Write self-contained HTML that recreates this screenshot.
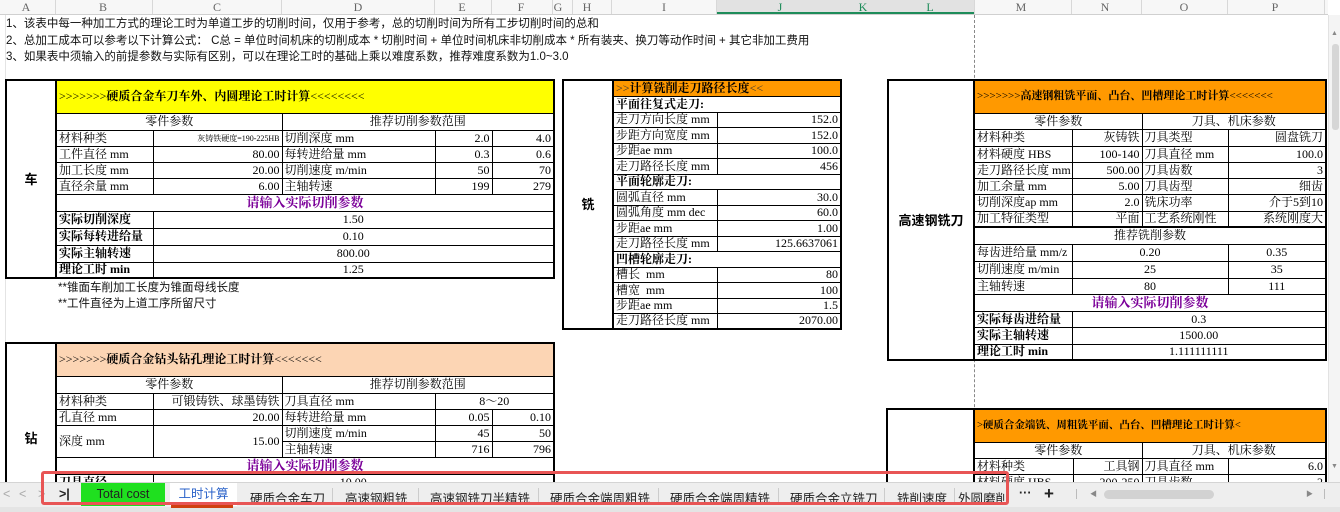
<!DOCTYPE html>
<html><head><meta charset="utf-8"><style>
*{box-sizing:border-box;margin:0;padding:0}
body{width:1340px;height:511px;overflow:hidden;background:#fff;position:relative;font-family:"Liberation Serif","Noto Serif CJK SC",serif;font-size:12px;color:#000}
.abs{position:absolute}
.hdr{position:absolute;top:0;left:0;width:1328px;height:15px;background:#f7f7f7;border-bottom:1px solid #d0d0d0;font-size:12px;color:#666}
.hdr span{position:absolute;top:0;line-height:14px;transform:translateX(-50%)}
.hdr i{position:absolute;top:0;height:14px;border-left:1px solid #d8d8d8}
.vg{position:absolute;top:15px;height:467px;border-left:1px solid #e4e4e4}
table{position:absolute;border-collapse:collapse;table-layout:fixed;background:#fff;border:2px solid #000}
td{border:1px solid #000;padding:0 2px;white-space:nowrap;overflow:hidden;line-height:13px;font-size:12px}
.r{text-align:right}.c{text-align:center}.b{font-weight:bold}
.pu{color:#7b0099;font-weight:bold;text-align:center;font-size:13px}
.lab{font-weight:bold;text-align:center;font-family:"Liberation Sans","Noto Sans CJK SC",sans-serif;font-size:13px}
.t{font-weight:bold;font-size:12px}
.g{font-size:11px;color:#800}
.note{position:absolute;left:6px;font-family:"Liberation Sans","Noto Sans CJK SC",sans-serif;font-size:11.5px;color:#111;white-space:nowrap}
</style></head><body>

<div class="hdr">
<span style="left:26px">A</span><span style="left:103px">B</span><span style="left:217px">C</span><span style="left:358px">D</span><span style="left:462px">E</span><span style="left:521px">F</span><span style="left:558px">G</span><span style="left:587px">H</span><span style="left:664px">I</span>
<div style="position:absolute;left:716px;top:0;width:258px;height:14px;background:#e2e2e2;border-bottom:2px solid #1e8c5a"></div>
<span style="left:780px;color:#1e8c5a">J</span><span style="left:863px;color:#1e8c5a">K</span><span style="left:930px;color:#1e8c5a">L</span><span style="left:1021px">M</span><span style="left:1105px">N</span><span style="left:1184px">O</span><span style="left:1275px">P</span>
<i style="left:55px"></i><i style="left:152px"></i><i style="left:281px"></i><i style="left:434px"></i><i style="left:491px"></i><i style="left:552px"></i><i style="left:572px"></i><i style="left:611px"></i><i style="left:716px"></i><i style="left:974px"></i><i style="left:1071px"></i><i style="left:1141px"></i><i style="left:1227px"></i><i style="left:1324px"></i>
</div>
<div class="vg" style="left:5px"></div>
<div class="abs" style="left:974px;top:15px;height:467px;border-left:1px dashed #888"></div>

<div class="note" style="top:15px">1、该表中每一种加工方式的理论工时为单道工步的切削时间，仅用于参考，总的切削时间为所有工步切削时间的总和</div>
<div class="note" style="top:32px">2、总加工成本可以参考以下计算公式：&nbsp;C总 = 单位时间机床的切削成本 * 切削时间 + 单位时间机床非切削成本 * 所有装夹、换刀等动作时间 + 其它非加工费用</div>
<div class="note" style="top:48px">3、如果表中须输入的前提参数与实际有区别，可以在理论工时的基础上乘以难度系数，推荐难度系数为1.0~3.0</div>

<!-- Table 1 车 -->
<table style="left:5px;top:79px;width:548px">
<colgroup><col style="width:50px"><col style="width:97px"><col style="width:129px"><col style="width:153px"><col style="width:57px"><col style="width:62px"></colgroup>
<tr style="height:33px"><td rowspan="11" class="lab" style="border-right:2px solid #000">车</td><td colspan="5" class="t" style="background:#ffff00"><span style="font-weight:normal">&gt;&gt;&gt;&gt;&gt;&gt;&gt;</span>硬质合金车刀车外、内圆理论工时计算<span style="font-weight:normal">&lt;&lt;&lt;&lt;&lt;&lt;&lt;&lt;</span></td></tr>
<tr style="height:17px"><td colspan="2" class="c">零件参数</td><td colspan="3" class="c">推荐切削参数范围</td></tr>
<tr style="height:16px"><td>材料种类</td><td class="r" style="font-size:8px">灰铸铁硬度=190-225HB</td><td>切削深度 mm</td><td class="r">2.0</td><td class="r">4.0</td></tr>
<tr style="height:16px"><td>工件直径 mm</td><td class="r">80.00</td><td>每转进给量 mm</td><td class="r">0.3</td><td class="r">0.6</td></tr>
<tr style="height:16px"><td>加工长度 mm</td><td class="r">20.00</td><td>切削速度 m/min</td><td class="r">50</td><td class="r">70</td></tr>
<tr style="height:16px"><td>直径余量 mm</td><td class="r">6.00</td><td>主轴转速</td><td class="r">199</td><td class="r">279</td></tr>
<tr style="height:17px"><td colspan="5" class="pu">请输入实际切削参数</td></tr>
<tr style="height:17px"><td class="b">实际切削深度</td><td colspan="4" class="c">1.50</td></tr>
<tr style="height:17px"><td class="b">实际每转进给量</td><td colspan="4" class="c">0.10</td></tr>
<tr style="height:17px"><td class="b">实际主轴转速</td><td colspan="4" class="c">800.00</td></tr>
<tr style="height:16px"><td class="b">理论工时 min</td><td colspan="4" class="c">1.25</td></tr>
</table>
<div class="note" style="left:58px;top:279px">**锥面车削加工长度为锥面母线长度</div>
<div class="note" style="left:58px;top:295px">**工件直径为上道工序所留尺寸</div>

<!-- Table 2 铣 -->
<table style="left:562px;top:79px;width:278px">
<colgroup><col style="width:50px"><col style="width:104px"><col style="width:124px"></colgroup>
<tr style="height:16px"><td rowspan="17" class="lab" style="border-right:2px solid #000">铣</td><td colspan="2" class="t" style="background:#ff9900"><span style="font-weight:normal;color:#333">&gt;&gt;</span>计算铣削走刀路径长度<span style="font-weight:normal;color:#333">&lt;&lt;</span></td></tr>
<tr style="height:16px"><td colspan="2" class="b">平面往复式走刀:</td></tr>
<tr style="height:15px"><td>走刀方向长度 mm</td><td class="r">152.0</td></tr>
<tr style="height:16px"><td>步距方向宽度 mm</td><td class="r">152.0</td></tr>
<tr style="height:15px"><td>步距ae mm</td><td class="r">100.0</td></tr>
<tr style="height:16px"><td>走刀路径长度 mm</td><td class="r">456</td></tr>
<tr style="height:15px"><td colspan="2" class="b">平面轮廓走刀:</td></tr>
<tr style="height:16px"><td>圆弧直径 mm</td><td class="r">30.0</td></tr>
<tr style="height:15px"><td>圆弧角度 mm dec</td><td class="r">60.0</td></tr>
<tr style="height:16px"><td>步距ae mm</td><td class="r">1.00</td></tr>
<tr style="height:15px"><td>走刀路径长度 mm</td><td class="r">125.6637061</td></tr>
<tr style="height:16px"><td colspan="2" class="b">凹槽轮廓走刀:</td></tr>
<tr style="height:15px"><td>槽长&nbsp; mm</td><td class="r">80</td></tr>
<tr style="height:16px"><td>槽宽&nbsp; mm</td><td class="r">100</td></tr>
<tr style="height:15px"><td>步距ae mm</td><td class="r">1.5</td></tr>
<tr style="height:16px"><td>走刀路径长度 mm</td><td class="r">2070.00</td></tr>
</table>

<!-- Table 3 高速钢铣刀 -->
<table style="left:887px;top:79px;width:438px">
<colgroup><col style="width:86px"><col style="width:98px"><col style="width:70px"><col style="width:86px"><col style="width:98px"></colgroup>
<tr style="height:33px"><td rowspan="16" class="lab" style="border-right:2px solid #000">高速钢铣刀</td><td colspan="4" class="t" style="background:#ff9900;font-size:11px"><span style="font-weight:normal">&gt;&gt;&gt;&gt;&gt;&gt;&gt;</span>高速钢粗铣平面、凸台、凹槽理论工时计算<span style="font-weight:normal">&lt;&lt;&lt;&lt;&lt;&lt;&lt;</span></td></tr>
<tr style="height:16px"><td colspan="2" class="c">零件参数</td><td colspan="2" class="c">刀具、机床参数</td></tr>
<tr style="height:17px"><td>材料种类</td><td class="r">灰铸铁</td><td>刀具类型</td><td class="r">圆盘铣刀</td></tr>
<tr style="height:16px"><td>材料硬度 HBS</td><td class="r">100-140</td><td>刀具直径 mm</td><td class="r">100.0</td></tr>
<tr style="height:16px"><td>走刀路径长度 mm</td><td class="r">500.00</td><td>刀具齿数</td><td class="r">3</td></tr>
<tr style="height:16px"><td>加工余量 mm</td><td class="r">5.00</td><td>刀具齿型</td><td class="r">细齿</td></tr>
<tr style="height:17px"><td>切削深度ap mm</td><td class="r">2.0</td><td>铣床功率</td><td class="r">介于5到10</td></tr>
<tr style="height:16px"><td>加工特征类型</td><td class="r">平面</td><td>工艺系统刚性</td><td class="r">系统刚度大</td></tr>
<tr style="height:17px"><td colspan="4" class="c" style="border-top:2px solid #000">推荐铣削参数</td></tr>
<tr style="height:17px"><td>每齿进给量 mm/z</td><td colspan="2" class="c">0.20</td><td class="c">0.35</td></tr>
<tr style="height:17px"><td>切削速度 m/min</td><td colspan="2" class="c">25</td><td class="c">35</td></tr>
<tr style="height:16px"><td>主轴转速</td><td colspan="2" class="c">80</td><td class="c">111</td></tr>
<tr style="height:17px"><td colspan="4" class="pu">请输入实际切削参数</td></tr>
<tr style="height:16px"><td class="b">实际每齿进给量</td><td colspan="3" class="c">0.3</td></tr>
<tr style="height:17px"><td class="b">实际主轴转速</td><td colspan="3" class="c">1500.00</td></tr>
<tr style="height:16px"><td class="b">理论工时 min</td><td colspan="3" class="c">1.111111111</td></tr>
</table>

<!-- Table 4 钻 -->
<table style="left:5px;top:342px;width:548px">
<colgroup><col style="width:50px"><col style="width:97px"><col style="width:129px"><col style="width:153px"><col style="width:57px"><col style="width:62px"></colgroup>
<tr style="height:33px"><td rowspan="10" class="lab" style="border-right:2px solid #000;vertical-align:top;padding-top:88px">钻</td><td colspan="5" class="t" style="background:#fcd5b4"><span style="font-weight:normal">&gt;&gt;&gt;&gt;&gt;&gt;&gt;</span>硬质合金钻头钻孔理论工时计算<span style="font-weight:normal">&lt;&lt;&lt;&lt;&lt;&lt;&lt;</span></td></tr>
<tr style="height:17px"><td colspan="2" class="c">零件参数</td><td colspan="3" class="c">推荐切削参数范围</td></tr>
<tr style="height:16px"><td>材料种类</td><td class="r">可锻铸铁、球墨铸铁</td><td>刀具直径 mm</td><td colspan="2" class="c">8～20</td></tr>
<tr style="height:16px"><td>孔直径 mm</td><td class="r">20.00</td><td>每转进给量 mm</td><td class="r">0.05</td><td class="r">0.10</td></tr>
<tr style="height:16px"><td rowspan="2">深度 mm</td><td rowspan="2" class="r">15.00</td><td>切削速度 m/min</td><td class="r">45</td><td class="r">50</td></tr>
<tr style="height:16px"><td>主轴转速</td><td class="r">716</td><td class="r">796</td></tr>
<tr style="height:17px"><td colspan="5" class="pu">请输入实际切削参数</td></tr>
<tr style="height:17px"><td class="b">刀具直径</td><td colspan="4" class="c">10.00</td></tr>
<tr style="height:17px"><td class="b">&nbsp;</td><td colspan="4"></td></tr>
</table>

<!-- Table 5 -->
<table style="left:886px;top:408px;width:439px">
<colgroup><col style="width:87px"><col style="width:99px"><col style="width:69px"><col style="width:86px"><col style="width:98px"></colgroup>
<tr style="height:33px"><td rowspan="5" style="border-right:2px solid #000"></td><td colspan="4" class="t" style="background:#ff9900;font-size:10.5px"><span style="font-weight:normal">&gt;</span>硬质合金端铣、周粗铣平面、凸台、凹槽理论工时计算<span style="font-weight:normal">&lt;</span></td></tr>
<tr style="height:16px"><td colspan="2" class="c">零件参数</td><td colspan="2" class="c">刀具、机床参数</td></tr>
<tr style="height:16px"><td>材料种类</td><td class="r">工具钢</td><td>刀具直径 mm</td><td class="r">6.0</td></tr>
<tr style="height:16px"><td>材料硬度 HBS</td><td class="r">200-250</td><td>刀具齿数</td><td class="r">2</td></tr>
<tr style="height:16px"><td></td><td></td><td></td><td></td></tr>
</table>

<!-- vertical scrollbar -->
<div class="abs" style="left:1328px;top:15px;width:12px;height:467px;background:#f4f4f4;border-left:1px solid #e2e2e2"></div>
<div class="abs" style="left:1332px;top:44px;width:7px;height:86px;background:#d6d6d6;border-radius:3px"></div>
<div class="abs" style="left:1331px;top:29px;font-size:7px;color:#888">▲</div>
<div class="abs" style="left:1331px;top:462px;font-size:7px;color:#888">▼</div>

<!-- tab bar -->
<div class="abs" style="left:0;top:482px;width:1340px;height:29px;background:#eeeeee;border-top:1px solid #d4d4d4;font-family:'Liberation Sans','Noto Sans CJK SC',sans-serif;font-size:12.5px;color:#222">
  <div class="abs" style="left:0;top:24px;width:1340px;height:5px;background:#e4e4e4"></div>
  <span class="abs" style="left:3px;top:4px;color:#aaa">&lt;</span>
  <span class="abs" style="left:19px;top:4px;color:#aaa">&lt;</span>
  <span class="abs" style="left:38px;top:4px;color:#aaa">&gt;</span>
  <span class="abs" style="left:59px;top:4px;font-weight:bold">&gt;|</span>
  <div class="abs" style="left:81px;top:0;width:84px;height:23px;background:#1fe01f;text-align:center;line-height:23px">Total cost</div>
  <div class="abs" style="left:170px;top:0;width:67px;height:23px;background:#fff;text-align:center;line-height:23px;color:#2a62c9">工时计算</div>
  <div class="abs" style="left:171px;top:22px;width:62px;height:3px;background:#d04010"></div>
  <span class="abs" style="left:250px;top:5px">硬质合金车刀</span>
  <span class="abs" style="left:345px;top:5px">高速钢粗铣</span>
  <span class="abs" style="left:430px;top:5px">高速钢铣刀半精铣</span>
  <span class="abs" style="left:550px;top:5px">硬质合金端周粗铣</span>
  <span class="abs" style="left:670px;top:5px">硬质合金端周精铣</span>
  <span class="abs" style="left:790px;top:5px">硬质合金立铣刀</span>
  <span class="abs" style="left:897px;top:5px">铣削速度</span>
  <span class="abs" style="left:958px;top:5px">外圆磨削</span>
  <i class="abs" style="left:332px;top:5px;height:14px;border-left:1px solid #ccc"></i>
  <i class="abs" style="left:418px;top:5px;height:14px;border-left:1px solid #ccc"></i>
  <i class="abs" style="left:538px;top:5px;height:14px;border-left:1px solid #ccc"></i>
  <i class="abs" style="left:658px;top:5px;height:14px;border-left:1px solid #ccc"></i>
  <i class="abs" style="left:778px;top:5px;height:14px;border-left:1px solid #ccc"></i>
  <i class="abs" style="left:884px;top:5px;height:14px;border-left:1px solid #ccc"></i>
  <i class="abs" style="left:954px;top:5px;height:14px;border-left:1px solid #ccc"></i>
  <span class="abs" style="left:1019px;top:3px;font-weight:bold">···</span>
  <span class="abs" style="left:1044px;top:1px;font-size:17px;font-weight:bold">+</span>
  <i class="abs" style="left:1076px;top:6px;height:10px;border-left:1px solid #bbb"></i>
  <span class="abs" style="left:1090px;top:6px;font-size:7px;color:#888">◀</span>
  <div class="abs" style="left:1104px;top:7px;width:110px;height:9px;background:#d2d2d2;border-radius:5px"></div>
  <span class="abs" style="left:1306px;top:6px;font-size:7px;color:#888">▶</span>
  <i class="abs" style="left:1324px;top:6px;height:10px;border-left:1px solid #bbb"></i>
</div>
<div class="abs" style="left:41px;top:471px;width:968px;height:34px;border:3px solid #e85555;border-radius:3px"></div>
</body></html>
